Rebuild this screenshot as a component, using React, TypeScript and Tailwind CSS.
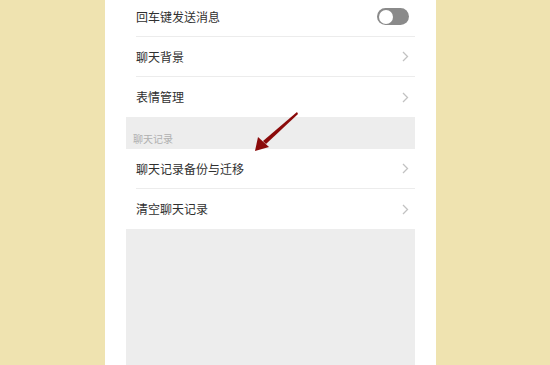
import React from "react";

function Chevron() {
  return (
    <svg width="7" height="11" viewBox="0 0 7 11" className="mr-[6px]">
      <path d="M1 1l4.5 4.5L1 10" fill="none" stroke="#c2c2c2" strokeWidth="1.3" />
    </svg>
  );
}

function Toggle() {
  return (
    <div className="w-[32px] h-[17px] rounded-full bg-[#8a8a8a] p-[1.5px] mr-[6px]">
      <div className="w-[14px] h-[14px] rounded-full bg-white" />
    </div>
  );
}

function Row({ label, right, divider = true }: { label: string; right: React.ReactNode; divider?: boolean }) {
  return (
    <div className="bg-white pl-[10px]">
      <div className={"h-[40px] flex items-center justify-between " + (divider ? "border-b border-[#ececec]" : "")}>
        <span className="text-[12px] text-[#303030]">{label}</span>
        {right}
      </div>
    </div>
  );
}

export default function App() {
  return (
    <div
      className="h-[365px] w-[550px] bg-[#efe3b0] flex overflow-hidden relative pl-[105px]"
      style={{ fontFamily: '"Noto Sans CJK SC", "Noto Sans", sans-serif' }}
    >
      <div className="w-[331px] bg-white px-[21px]">
        <div className="mt-[-3px] flex flex-col bg-[#ededed] h-[370px]">
          <Row label="回车键发送消息" right={<Toggle />} />
          <Row label="聊天背景" right={<Chevron />} />
          <Row label="表情管理" right={<Chevron />} divider={false} />
          <div className="h-[32px] flex items-center pl-[7px] pt-[10px]">
            <span className="text-[10px] text-[#b0b0b0]">聊天记录</span>
          </div>
          <Row label="聊天记录备份与迁移" right={<Chevron />} />
          <Row label="清空聊天记录" right={<Chevron />} divider={false} />
        </div>
      </div>
      <svg className="absolute left-0 top-0" width="550" height="365">
        <polygon points="297,112 298,114 266,144 263,141" fill="#8b0a0a" />
        <polygon points="255,151 258,137 269,147" fill="#8b0a0a" />
      </svg>
    </div>
  );
}
